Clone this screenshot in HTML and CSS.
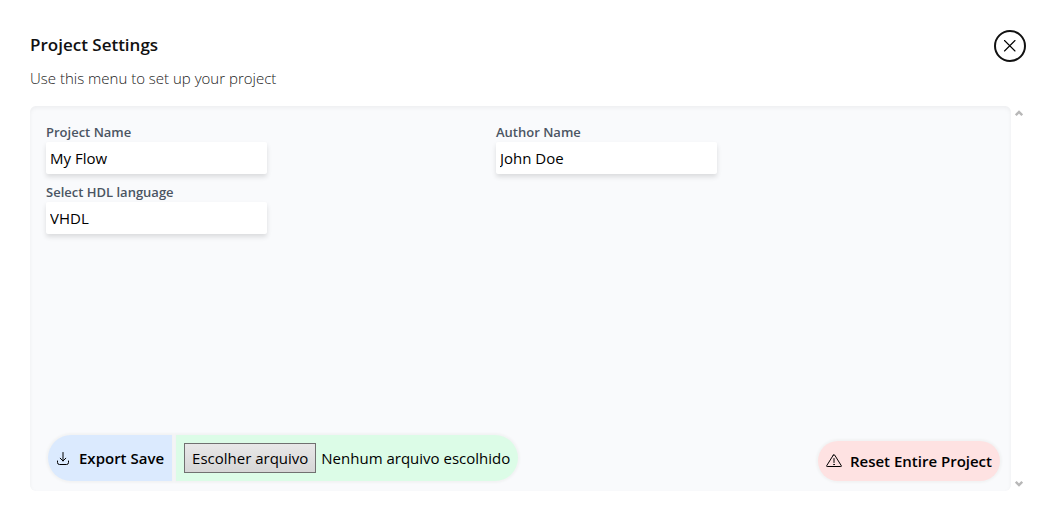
FILE: index.html
```html
<!DOCTYPE html>
<html lang="en">
<head>
<meta charset="utf-8">
<meta name="viewport" content="width=device-width, initial-scale=1">
<title>Project Settings</title>
<link rel="stylesheet" href="styles.css">
</head>
<body>
<main class="dialog">
  <header class="header">
    <div class="heading">
      <h1 class="title">Project Settings</h1>
      <p class="subtitle">Use this menu to set up your project</p>
    </div>
    <button class="close" type="button" aria-label="Close">
      <svg width="14" height="14" viewBox="0 0 14 14" fill="none" stroke="currentColor" stroke-width="1.1" stroke-linecap="round"><path d="M1.500 1.500l10.500 10.500M12 1.500L1.500 12"/></svg>
    </button>
  </header>
  <div class="scroller">
    <form class="panel">
      <div class="fields">
        <div class="field">
          <label class="label" for="project">Project Name</label>
          <input class="control" id="project" type="text" value="My Flow">
        </div>
        <div class="field">
          <label class="label" for="author">Author Name</label>
          <input class="control" id="author" type="text" value="John Doe">
        </div>
        <div class="field">
          <label class="label" for="language">Select HDL language</label>
          <select class="control" id="language"><option>VHDL</option></select>
        </div>
      </div>
      <div class="actions">
        <div class="files">
          <button class="action export" type="button">
            <svg width="14" height="14" viewBox="0 0 14 14" fill="none" stroke="currentColor" stroke-width="1" stroke-linecap="round" stroke-linejoin="round"><path d="M7 1.500v8.500M4.200 7.200L7 10l2.800-2.800M1.500 10v1.500q0 2 2 2h7q2 0 2-2v-1.500"/></svg>
            Export Save
          </button>
          <div class="upload">
            <input class="upload-input" id="file" type="file">
            <label class="upload-button" for="file">Escolher arquivo</label>
            <span class="upload-status">Nenhum arquivo escolhido</span>
          </div>
        </div>
        <button class="action reset" type="button">
          <svg width="16" height="16" viewBox="0 0 16 16" fill="none" stroke="currentColor" stroke-width="1" stroke-linecap="round" stroke-linejoin="round"><path d="M7.300 2.100L.7 12.700Q.3 13.500 1.200 13.500h13.600Q15.700 13.500 15.300 12.700L8.700 2.100Q8 1.300 7.300 2.100zM8 5.500v4"/><circle cx="8" cy="11.500" r=".3"/></svg>
          Reset Entire Project
        </button>
      </div>
    </form>
    <div class="scrollbar">
      <svg width="8" height="8" viewBox="0 0 8 8" fill="none" stroke="currentColor" stroke-width="2.400"><path d="M.8 6.200L4 3l3.200 3.200"/></svg>
      <svg width="8" height="8" viewBox="0 0 8 8" fill="none" stroke="currentColor" stroke-width="2.400"><path d="M.8 1.800L4 5l3.200-3.200"/></svg>
    </div>
  </div>
</main>
</body>
</html>
```

FILE: styles.css
```css
* {
  box-sizing: border-box;
}

body {
  margin: 0;
  background: #fff;
  color: #000;
  font-family: "Segoe UI", "Open Sans", "Noto Sans", sans-serif;
  font-size: 15px;
  line-height: 24px;
}

button,
input,
select {
  font: inherit;
  color: inherit;
}

.dialog {
  display: flex;
  flex-direction: column;
  min-height: 100vh;
  padding: 30px 30px 29px;
}

.header {
  display: flex;
  justify-content: space-between;
  align-items: flex-start;
  padding-bottom: 16px;
}

.title {
  margin: 0;
  font-size: 17px;
  font-weight: 600;
  line-height: 30px;
  color: #111;
}

.subtitle {
  margin: 6px 0 0;
  font-weight: 300;
  color: #222;
}

.close {
  display: flex;
  align-items: center;
  justify-content: center;
  width: 32px;
  height: 32px;
  padding: 0;
  border: 2px solid #111;
  border-radius: 50%;
  background: #fff;
}

.scroller {
  display: flex;
  flex: 1;
}

.panel {
  display: flex;
  flex: 1;
  flex-direction: column;
  justify-content: space-between;
  gap: 24px;
  padding: 16px 11px 10px 16px;
  border-radius: 6px;
  background: #f9fafc;
  box-shadow: inset 0 2px 4px rgba(0, 0, 0, 0.05);
}

.fields {
  display: grid;
  grid-template-columns: 1fr 1fr;
  gap: 8px;
  padding-right: 62px;
}

.field {
  display: flex;
  flex-direction: column;
  align-items: flex-start;
}

.label {
  font-size: 13px;
  font-weight: 600;
  line-height: 20px;
  color: #4b5563;
}

.control {
  width: 221px;
  max-width: 100%;
  height: 32px;
  padding: 0 4px;
  border: 0;
  border-radius: 2px;
  background: #fff;
  box-shadow: 0 3px 5px rgba(0, 0, 0, 0.12);
  appearance: none;
}

.actions {
  display: flex;
  flex-wrap: wrap;
  justify-content: space-between;
  align-items: flex-end;
  gap: 12px;
  padding-left: 2px;
}

.files {
  display: flex;
  gap: 4px;
}

.action {
  display: flex;
  align-items: center;
  gap: 8px;
  padding: 8px;
  border: 0;
  font-weight: 600;
  white-space: nowrap;
}

.action,
.upload {
  box-shadow: 0 0 2px 2px #f2f3f4;
}

.export {
  gap: 9px;
  border-radius: 23px 0 0 23px;
  background: #dbeafe;
}

.upload {
  display: flex;
  align-items: center;
  gap: 5px;
  padding: 8px;
  border-radius: 0 23px 23px 0;
  background: #dcfce7;
  white-space: nowrap;
}

.upload-input {
  width: 1px;
  height: 1px;
  margin-right: -6px;
  opacity: 0;
}

.upload-button {
  padding: 1px 7px;
  border: 1px solid #707070;
  background: linear-gradient(#e8e8e8, #d6d6d6);
  line-height: 26px;
}

.reset {
  border-radius: 20px;
  background: #fee2e2;
}

.scrollbar {
  display: flex;
  flex-direction: column;
  align-items: center;
  justify-content: space-between;
  width: 15px;
  padding: 3px 0;
  color: #b8b8b8;
}
```
